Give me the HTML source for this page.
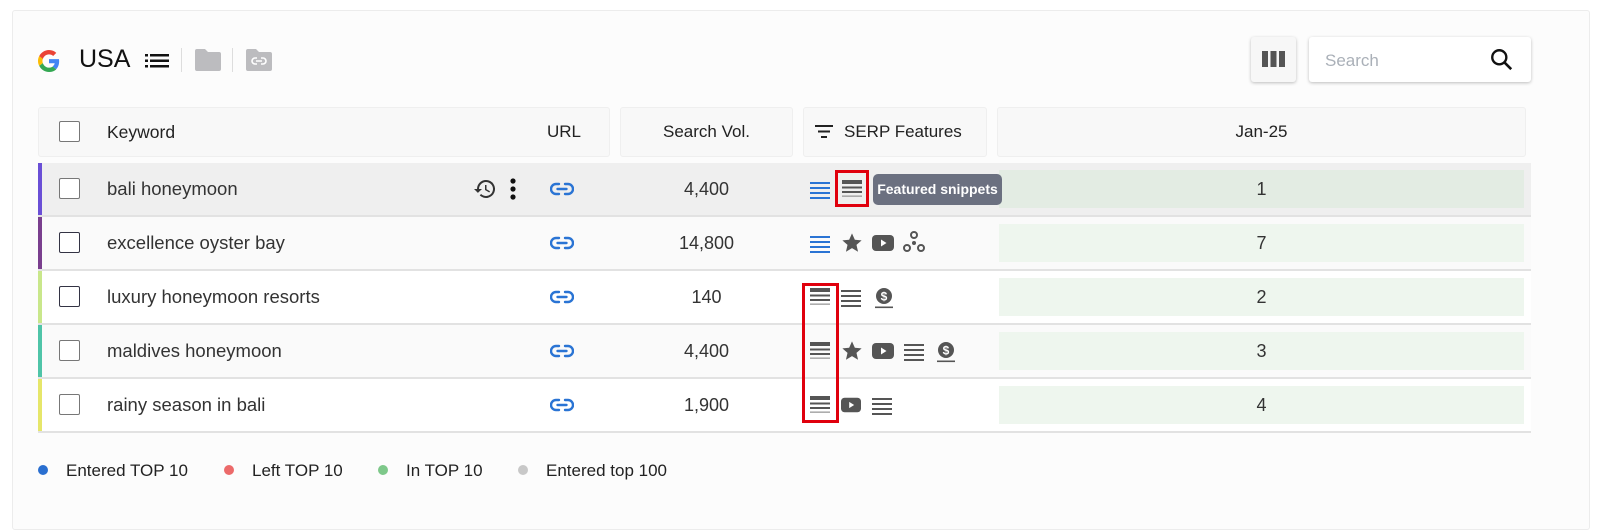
<!DOCTYPE html>
<html><head><meta charset="utf-8"><style>
*{box-sizing:border-box;margin:0;padding:0}
body{width:1600px;height:518px;background:#fff;font-family:"Liberation Sans","DejaVu Sans",sans-serif;color:#222;position:relative;overflow:hidden}
.card{position:absolute;left:12px;top:10px;width:1578px;height:520px;background:#fcfcfc;border:1px solid #ececec;border-radius:3px}
.a{position:absolute}
.hc{position:absolute;top:107px;height:50px;background:#f8f8f8;border:1px solid #efefef;border-radius:3px;font-size:17px;line-height:48px;color:#222}
.row{position:absolute;left:38px;width:1493px;height:54px;border-bottom:2px solid #e2e2e2}
.bar{position:absolute;left:0;top:0;width:4px;height:52px}
.cb{position:absolute;left:21px;top:15px;width:21px;height:21px;border:1.5px solid #777;border-radius:2px;background:#fff}
.kw{position:absolute;left:69px;top:0;line-height:52px;font-size:18.5px;color:#333}
.vol{position:absolute;left:582px;width:173px;text-align:center;line-height:52px;font-size:18px;color:#333}
.jan{position:absolute;left:961px;top:7px;width:525px;height:38px;line-height:38px;text-align:center;font-size:18px;color:#333}
.ic{position:absolute;top:16px}
.leg{position:absolute;top:461px;font-size:17px;color:#222}
.dot{display:inline-block;width:10px;height:10px;border-radius:50%;margin-right:18px;vertical-align:1px}
</style></head><body>
<div class="card"></div>
<svg class="a" style="left:38px;top:50px" width="22" height="22" viewBox="0 0 48 48"><path fill="#EA4335" d="M24 9.5c3.5 0 6.6 1.2 9.1 3.6l6.8-6.8C35.8 2.4 30.3 0 24 0 14.6 0 6.6 5.4 2.7 13.3l7.9 6.2C12.5 13.6 17.8 9.5 24 9.5z"/><path fill="#4285F4" d="M46.1 24.5c0-1.6-.1-3.1-.4-4.5H24v9h12.4c-.5 2.9-2.2 5.3-4.6 6.9l7.7 6c4.5-4.1 6.6-10.2 6.6-17.4z"/><path fill="#FBBC05" d="M10.5 28.6c-.5-1.4-.8-3-.8-4.6s.3-3.2.8-4.6l-7.9-6.2C1 16.5 0 20.1 0 24s1 7.5 2.7 10.7l7.8-6.1z"/><path fill="#34A853" d="M24 48c6.5 0 11.9-2.1 15.9-5.8l-7.7-6c-2.1 1.4-4.9 2.3-8.2 2.3-6.2 0-11.5-4.2-13.4-9.9l-7.9 6.1C6.6 42.6 14.6 48 24 48z"/></svg>
<div class="a" style="left:79px;top:45px;font-size:25px;color:#111">USA</div>
<svg class="a" style="left:145px;top:52px" width="24" height="18" viewBox="0 0 24 18"><g fill="#111"><rect x="0" y="2" width="3" height="2.5"/><rect x="0" y="7.5" width="3" height="2.5"/><rect x="0" y="13" width="3" height="2.5"/><rect x="5" y="2" width="19" height="2.5"/><rect x="5" y="7.5" width="19" height="2.5"/><rect x="5" y="13" width="19" height="2.5"/></g></svg>
<div class="a" style="left:181px;top:48px;width:1px;height:24px;background:#ddd"></div>
<svg class="a" style="left:195px;top:49px" width="26" height="22" viewBox="0 0 26 22"><path fill="#bcbcbf" d="M2 0h8l3 3h11a2 2 0 0 1 2 2v15a2 2 0 0 1-2 2H2a2 2 0 0 1-2-2V2a2 2 0 0 1 2-2z"/></svg>
<div class="a" style="left:232px;top:48px;width:1px;height:24px;background:#ddd"></div>
<svg class="a" style="left:246px;top:49px" width="26" height="22" viewBox="0 0 26 22"><path fill="#bcbcbf" d="M2 0h8l3 3h11a2 2 0 0 1 2 2v15a2 2 0 0 1-2 2H2a2 2 0 0 1-2-2V2a2 2 0 0 1 2-2z"/><path d="M11 9h-2a3 3 0 0 0 0 6h2M15 9h2a3 3 0 0 1 0 6h-2M10 12h6" stroke="#fff" stroke-width="1.6" fill="none"/></svg>
<div class="a" style="left:1251px;top:37px;width:45px;height:45px;background:#f7f7f7;border-radius:3px;box-shadow:0 1px 3px rgba(0,0,0,.25)"></div>
<svg class="a" style="left:1262px;top:51px" width="23" height="16"><rect x="0" y="0" width="6" height="16" fill="#555"/><rect x="8.5" y="0" width="6" height="16" fill="#555"/><rect x="17" y="0" width="6" height="16" fill="#555"/></svg>
<div class="a" style="left:1309px;top:37px;width:222px;height:45px;background:#fff;border-radius:3px;box-shadow:0 1px 3px rgba(0,0,0,.25)"></div>
<div class="a" style="left:1325px;top:51px;font-size:17px;color:#aab0b8">Search</div>
<svg class="a" style="left:1489px;top:47px" width="26" height="26" viewBox="0 0 24 24"><circle cx="9.5" cy="9.5" r="6.5" stroke="#111" stroke-width="2.2" fill="none"/><path d="M14.5 14.5l6 6" stroke="#111" stroke-width="2.4"/></svg>
<div class="hc" style="left:38px;width:572px"></div>
<div class="cb" style="left:59px;top:121px"></div>
<div class="a" style="left:107px;top:107px;line-height:50px;font-size:17.5px">Keyword</div>
<div class="a" style="left:547px;top:107px;line-height:50px;font-size:17px">URL</div>
<div class="hc" style="left:620px;width:173px;text-align:center">Search Vol.</div>
<div class="hc" style="left:803px;width:184px;padding-left:40px">SERP Features</div>
<svg class="a" style="left:815px;top:125px" width="18" height="13"><rect x="0" y="0" width="18" height="2" fill="#222"/><rect x="3" y="5.5" width="12" height="2" fill="#222"/><rect x="6" y="11" width="6" height="2" fill="#222"/></svg>
<div class="hc" style="left:997px;width:529px;text-align:center">Jan-25</div>

<svg width="0" height="0" style="position:absolute"><defs>
<symbol id="link" viewBox="0 0 24 14"><path d="M9 2H6a5 5 0 0 0 0 10h3M15 2h3a5 5 0 0 1 0 10h-3M7.5 7h9" stroke="#2a74d4" stroke-width="2.4" fill="none" stroke-linecap="round"/></symbol>
<symbol id="listb" viewBox="0 0 20 18"><g fill="#2a74d4"><rect y="1" width="20" height="2"/><rect y="6" width="20" height="2"/><rect y="11" width="20" height="2"/><rect y="16" width="20" height="2"/></g></symbol>
<symbol id="listg" viewBox="0 0 20 18"><g fill="#555"><rect y="1" width="20" height="2"/><rect y="6" width="20" height="2"/><rect y="11" width="20" height="2"/><rect y="16" width="20" height="2"/></g></symbol>
<symbol id="fs" viewBox="0 0 20 18"><g fill="#555"><rect y="0" width="20" height="4"/><rect y="6.5" width="20" height="2"/><rect y="11" width="20" height="2"/><rect y="15.5" width="20" height="1.3" fill="#999"/></g></symbol>
<symbol id="star" viewBox="0 0 24 24"><path fill="#555" d="M12 1.5l3.1 7 7.4.6-5.6 5 1.7 7.4L12 17.6l-6.6 3.9 1.7-7.4-5.6-5 7.4-.6z"/></symbol>
<symbol id="yt" viewBox="0 0 22 16"><rect width="22" height="16" rx="4" fill="#555"/><path d="M9 4.5v7l5.5-3.5z" fill="#fff"/></symbol>
<symbol id="grp" viewBox="0 0 22 22"><g stroke="#555" stroke-width="2" fill="none"><circle cx="11" cy="4" r="3"/><circle cx="4" cy="17" r="3"/><circle cx="18" cy="17" r="3"/></g><circle cx="11" cy="12" r="2" fill="#555"/></symbol>
<symbol id="usd" viewBox="0 0 20 22"><circle cx="10" cy="9" r="8" fill="#555"/><text x="10" y="13.5" font-size="12" font-weight="bold" fill="#fff" text-anchor="middle" font-family="Liberation Sans">$</text><rect x="1" y="19.5" width="18" height="1.6" fill="#555"/></symbol>
</defs></svg>

<div class="row" style="top:163px;background:#efefef;z-index:2"><div class="bar" style="background:#6a4fd6"></div><div class="cb"></div><div class="kw">bali honeymoon</div>
<svg class="ic" style="left:435px;top:14px" width="24" height="24" viewBox="0 0 24 24"><path d="M13 3a9 9 0 0 0-9 9H1l3.9 3.9L9 12H6a7 7 0 1 1 2.1 5l-1.4 1.4A9 9 0 1 0 13 3zm-1 5v5l4.3 2.5.7-1.2-3.5-2.1V8z" fill="#333"/></svg>
<svg class="ic" style="left:472px;top:15px" width="6" height="22"><circle cx="3" cy="3" r="2.6" fill="#111"/><circle cx="3" cy="11" r="2.6" fill="#111"/><circle cx="3" cy="19" r="2.6" fill="#111"/></svg>
<svg class="ic" style="left:512px;top:19px" width="24" height="14"><use href="#link"/></svg>
<div class="vol">4,400</div>
<div class="jan" style="background:#e3ece3">1</div>
<svg class="ic" style="left:772px;top:18px" width="20" height="18"><use href="#listb"/></svg>
<div class="a" style="left:797px;top:7px;width:34px;height:37px;border:3px solid #e0000d"></div>
<svg class="ic" style="left:804px;top:17px" width="20" height="18"><use href="#fs"/></svg>
<div class="a" style="left:835px;top:11px;width:129px;height:31px;background:#6b7080;border-radius:5px;color:#fff;font-size:14px;font-weight:bold;line-height:31px;text-align:center">Featured snippets</div>
</div>
<div class="row" style="top:217px;background:#fafafa"><div class="bar" style="background:#7a3f8e"></div><div class="cb" style="border-color:#334"></div><div class="kw">excellence oyster bay</div>
<svg class="ic" style="left:512px;top:19px" width="24" height="14"><use href="#link"/></svg>
<div class="vol">14,800</div>
<svg class="ic" style="left:772px;top:18px" width="20" height="18"><use href="#listb"/></svg>
<svg class="ic" style="left:803px;top:15px" width="22" height="22"><use href="#star"/></svg>
<svg class="ic" style="left:834px;top:18px" width="22" height="16"><use href="#yt"/></svg>
<svg class="ic" style="left:865px;top:14px" width="22" height="22"><use href="#grp"/></svg>
<div class="jan" style="background:#eef6ee">7</div></div>
<div class="row" style="top:271px;background:#fff"><div class="bar" style="background:#c9e78b"></div><div class="cb" style="border-color:#334"></div><div class="kw">luxury honeymoon resorts</div>
<svg class="ic" style="left:512px;top:19px" width="24" height="14"><use href="#link"/></svg>
<div class="vol">140</div>
<svg class="ic" style="left:772px;top:17px" width="20" height="18"><use href="#fs"/></svg>
<svg class="ic" style="left:803px;top:18px" width="20" height="18"><use href="#listg"/></svg>
<svg class="ic" style="left:836px;top:16px" width="20" height="22"><use href="#usd"/></svg>
<div class="jan" style="background:#eef6ee">2</div></div>
<div class="row" style="top:325px;background:#fafafa"><div class="bar" style="background:#4fc4a8"></div><div class="cb"></div><div class="kw">maldives honeymoon</div>
<svg class="ic" style="left:512px;top:19px" width="24" height="14"><use href="#link"/></svg>
<div class="vol">4,400</div>
<svg class="ic" style="left:772px;top:17px" width="20" height="18"><use href="#fs"/></svg>
<svg class="ic" style="left:803px;top:15px" width="22" height="22"><use href="#star"/></svg>
<svg class="ic" style="left:834px;top:18px" width="22" height="16"><use href="#yt"/></svg>
<svg class="ic" style="left:866px;top:18px" width="20" height="18"><use href="#listg"/></svg>
<svg class="ic" style="left:898px;top:16px" width="20" height="22"><use href="#usd"/></svg>
<div class="jan" style="background:#eef6ee">3</div></div>
<div class="row" style="top:379px;background:#fff"><div class="bar" style="background:#e6e66a"></div><div class="cb"></div><div class="kw">rainy season in bali</div>
<svg class="ic" style="left:512px;top:19px" width="24" height="14"><use href="#link"/></svg>
<div class="vol">1,900</div>
<svg class="ic" style="left:772px;top:17px" width="20" height="18"><use href="#fs"/></svg>
<svg class="ic" style="left:803px;top:18px" width="20" height="16"><use href="#yt"/></svg>
<svg class="ic" style="left:834px;top:18px" width="20" height="18"><use href="#listg"/></svg>
<div class="jan" style="background:#eef6ee">4</div></div>
<div class="a" style="left:802px;top:283px;width:37px;height:140px;border:3px solid #e0000d;z-index:3"></div>
<div class="leg" style="left:38px"><span class="dot" style="background:#2a6fd0"></span>Entered TOP 10</div>
<div class="leg" style="left:224px"><span class="dot" style="background:#ec6a6a"></span>Left TOP 10</div>
<div class="leg" style="left:378px"><span class="dot" style="background:#7ec88a"></span>In TOP 10</div>
<div class="leg" style="left:518px"><span class="dot" style="background:#c8c8c8"></span>Entered top 100</div>
</body></html>
